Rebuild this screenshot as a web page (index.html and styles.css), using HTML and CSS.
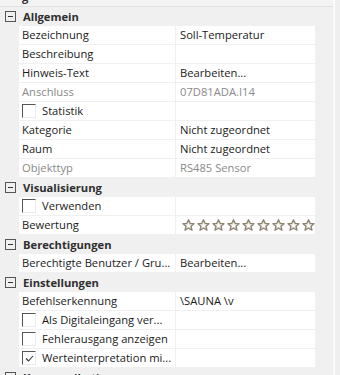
FILE: index.html
```html
<!DOCTYPE html>
<html lang="de">
<head>
    <meta charset="UTF-8">
    <title>Eigenschaften</title>
    <link rel="stylesheet" href="styles.css">
</head>
<body>
    <div class="grid">
        <div class="top-strip"><span>g</span></div>

        <div class="cat"><span class="toggle"></span><span class="cat-title">Allgemein</span></div>
        <div class="row"><div class="name">Bezeichnung</div><div class="value">Soll-Temperatur</div></div>
        <div class="row"><div class="name">Beschreibung</div><div class="value"></div></div>
        <div class="row"><div class="name">Hinweis-Text</div><div class="value">Bearbeiten...</div></div>
        <div class="row"><div class="name muted">Anschluss</div><div class="value muted">07D81ADA.I14</div></div>
        <div class="row"><div class="name check"><span class="box"></span>Statistik</div><div class="value"></div></div>
        <div class="row"><div class="name">Kategorie</div><div class="value">Nicht zugeordnet</div></div>
        <div class="row"><div class="name">Raum</div><div class="value">Nicht zugeordnet</div></div>
        <div class="row"><div class="name muted">Objekttyp</div><div class="value muted">RS485 Sensor</div></div>

        <div class="cat"><span class="toggle"></span><span class="cat-title">Visualisierung</span></div>
        <div class="row"><div class="name check"><span class="box"></span>Verwenden</div><div class="value"></div></div>
        <div class="row"><div class="name">Bewertung</div><div class="value stars" id="stars"></div></div>

        <div class="cat"><span class="toggle"></span><span class="cat-title">Berechtigungen</span></div>
        <div class="row"><div class="name">Berechtigte Benutzer / Gru...</div><div class="value">Bearbeiten...</div></div>

        <div class="cat"><span class="toggle"></span><span class="cat-title">Einstellungen</span></div>
        <div class="row"><div class="name">Befehlserkennung</div><div class="value">\SAUNA \v</div></div>
        <div class="row"><div class="name check"><span class="box"></span>Als Digitaleingang ver...</div><div class="value"></div></div>
        <div class="row"><div class="name check"><span class="box"></span>Fehlerausgang anzeigen</div><div class="value"></div></div>
        <div class="row"><div class="name check"><span class="box checked"><svg width="11" height="11" viewBox="0 0 11 11"><polyline points="2,5.5 4.5,8 9,3" fill="none" stroke="#333" stroke-width="1.1"/></svg></span>Werteinterpretation mi...</div><div class="value"></div></div>

        <div class="cat"><span class="toggle"></span><span class="cat-title">Kommunikation</span></div>
    </div>
    <div class="scrollbar"></div>

    <script>
        // 9 empty rating stars
        const stars = document.getElementById('stars');
        const star = '<svg class="star" width="13" height="12" viewBox="0 0 13 12"><polygon points="6.5,0.8 8.2,4.3 12,4.7 9.1,7.3 10,11.2 6.5,9.2 3,11.2 3.9,7.3 1,4.7 4.8,4.3" fill="#ddd8cc" stroke="#8d8574" stroke-width="1.3" stroke-linejoin="round"/><polygon points="6.5,4 7.3,5.6 9,5.8 7.7,7 8.1,8.6 6.5,7.8 4.9,8.6 5.3,7 4,5.8 5.7,5.6" fill="#fff"/></svg>';
        for (let i = 0; i < 9; i++) {
            stars.innerHTML += star;
        }
    </script>
</body>
</html>
```

FILE: styles.css
```css
body, html {
    margin: 0;
    padding: 0;
    height: 100%;
    overflow: hidden;
}
body {
    display: flex;
    background-color: #f0f0f0;
    font-family: "Open Sans", "Noto Sans", sans-serif;
    font-size: 11.2px;
    color: #1a1a1a;
}
.grid {
    width: 333px;
    flex: none;
}
.scrollbar {
    flex: 1;
    border-left: 2px solid #fbfbfb;
    background-color: #efefef;
}
.top-strip {
    height: 6px;
    border-bottom: 1px solid #e2e2e2;
    background-color: #f3f3f3;
    overflow: hidden;
    padding-left: 22px;
}
.top-strip span {
    display: block;
    font-weight: bold;
    line-height: 18px;
    margin-top: -12px;
    color: #333;
}
.cat {
    height: 19px;
    display: flex;
    align-items: center;
    background-color: #f0f0f0;
}
.toggle {
    width: 9px;
    height: 9px;
    border: 1px solid #555;
    margin-left: 5px;
    margin-right: 7px;
    position: relative;
    flex: none;
}
.toggle::after {
    content: "";
    position: absolute;
    left: 2px;
    right: 2px;
    top: 4px;
    height: 1px;
    background-color: #333;
}
.cat-title {
    font-weight: bold;
    color: #2e2e2e;
}
.row {
    display: flex;
    margin-left: 19px;
    width: 296px;
    height: 18px;
    line-height: 18px;
    background-color: #fff;
    border-bottom: 1px solid #f0f0f0;
}
.name {
    width: 153px;
    padding-left: 3px;
    white-space: nowrap;
    overflow: hidden;
}
.value {
    flex: 1;
    border-left: 1px solid #f0f0f0;
    padding-left: 4px;
    white-space: nowrap;
    overflow: hidden;
}
.muted {
    color: #8a8a8a;
}
.check {
    display: flex;
    align-items: center;
}
.box {
    width: 12px;
    height: 12px;
    border-top: 1px solid #555;
    border-left: 1px solid #555;
    border-right: 1px solid #ececec;
    border-bottom: 1px solid #ececec;
    margin-right: 6px;
    flex: none;
    display: flex;
    align-items: center;
    justify-content: center;
}
.stars {
    display: flex;
    align-items: center;
    gap: 2px;
    padding-left: 6px;
}
.star {
    flex: none;
}
```
